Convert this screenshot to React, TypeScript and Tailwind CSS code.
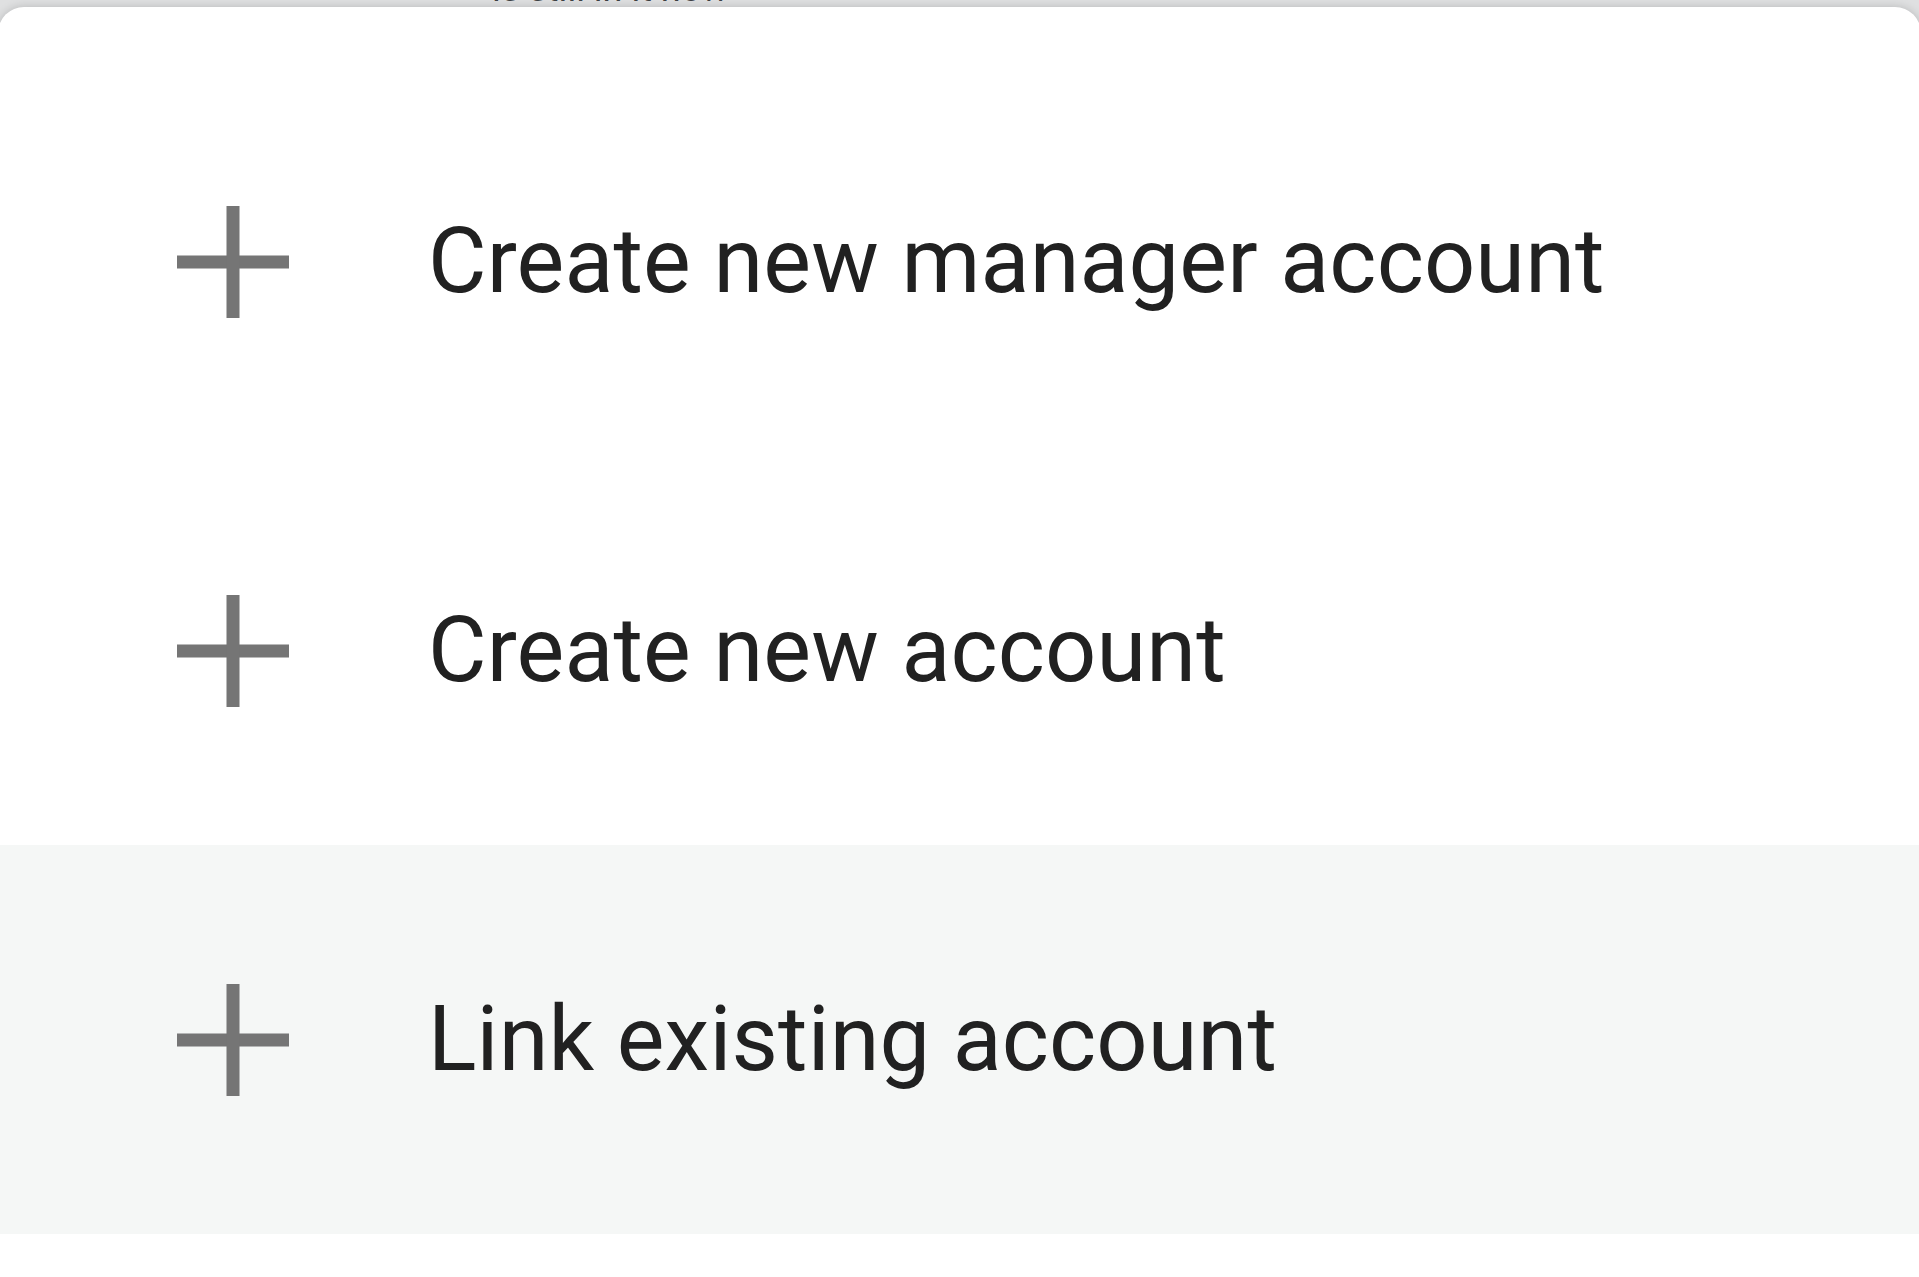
import React from "react";

const items = [
  { label: "Create new manager account", hover: false },
  { label: "Create new account", hover: false },
  { label: "Link existing account", hover: true },
];

function PlusIcon() {
  return (
    <svg width="112" height="112" viewBox="0 0 112 112" className="shrink-0">
      <rect x="0" y="49.5" width="112" height="13" fill="#757575" />
      <rect x="49.5" y="0" width="13" height="112" fill="#757575" />
    </svg>
  );
}

export default function App() {
  return (
    <div
      className="w-[1919px] h-[1277px] overflow-hidden bg-[#dfe0e1] flex flex-col"
      style={{ fontFamily: "Roboto, 'Noto Sans', sans-serif" }}
    >
      {/* page behind the sheet, mostly cut off */}
      <div className="h-[7px] shrink-0 overflow-hidden relative">
        <div className="absolute bottom-0 left-[492px] text-[36px] leading-[36px] text-[#3c4043] whitespace-nowrap">
          is still in it now
        </div>
      </div>

      <div className="flex-1 ml-[-2px] mr-[-2px] bg-white rounded-t-[26px] shadow-[0_0_10px_rgba(0,0,0,0.18)] pt-[60px]">
        {items.map((it) => (
          <div
            key={it.label}
            className={`h-[389px] flex items-center pl-[179px] ${it.hover ? "bg-[#f5f7f6]" : ""}`}
          >
            <PlusIcon />
            <span className="ml-[139px] text-[90px] leading-none text-[#212121] tracking-[0.15px]">
              {it.label}
            </span>
          </div>
        ))}
      </div>
    </div>
  );
}
